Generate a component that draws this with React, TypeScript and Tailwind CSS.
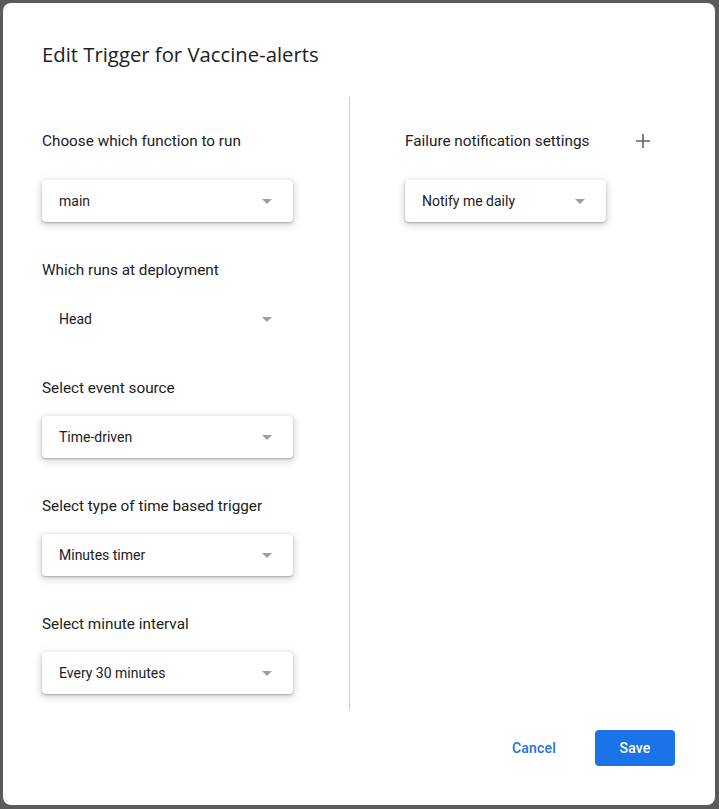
import React from "react";

// Campos del trigger, columna izquierda
const campos = [
  { label: "Choose which function to run", value: "main", box: true },
  { label: "Which runs at deployment", value: "Head", box: false },
  { label: "Select event source", value: "Time-driven", box: true },
  { label: "Select type of time based trigger", value: "Minutes timer", box: true },
  { label: "Select minute interval", value: "Every 30 minutes", box: true },
];

const Dropdown = ({ value, box, width }: { value: string; box: boolean; width: string }) => (
  <div
    className={`flex h-[42px] items-center justify-between rounded pl-[17px] pr-[21px] ${width} ${
      box ? "bg-white shadow-[0_1px_2px_rgba(60,64,67,0.35),0_2px_6px_2px_rgba(60,64,67,0.18)]" : ""
    }`}
  >
    <span className="text-[14px] text-[#202124]">{value}</span>
    <span className="h-0 w-0 border-x-[5.5px] border-t-[5px] border-x-transparent border-t-[#9e9e9e]" />
  </div>
);

export default function App() {
  return (
    <div
      className="h-[809px] w-[719px] bg-[#5b5b5b] pb-[4px] pl-[3px] pr-[4px] pt-[3px]"
      style={{ fontFamily: "Roboto, 'Liberation Sans', sans-serif" }}
    >
      <div className="flex h-full flex-col rounded-lg bg-white">
        <h1
          className="pl-[39px] pt-[37px] text-[20.3px] leading-[28px] text-[#202124]"
          style={{ fontFamily: "'Open Sans', Roboto, sans-serif" }}
        >
          Edit Trigger for Vaccine-alerts
        </h1>

        <div className="mt-[29px] flex h-[613px]">
          {/* columna izquierda */}
          <section className="w-[346px] pl-[39px] pt-[34px]">
            {campos.map((campo, key) => (
              <div key={key} className={key === 0 ? "" : "mt-[38px]"}>
                <p className="text-[15.3px] leading-[20px] text-[#202124]">{campo.label}</p>
                <div className={key === 0 ? "mt-[29px]" : "mt-[18px]"}>
                  <Dropdown value={campo.value} box={campo.box} width="w-[251px]" />
                </div>
              </div>
            ))}
          </section>

          <div className="w-px bg-[#cfcfcf]" />

          {/* columna derecha */}
          <section className="pl-[55px] pt-[34px]">
            <div className="flex w-[245px] items-center justify-between">
              <p className="text-[15.3px] leading-[20px] text-[#202124]">Failure notification settings</p>
              <svg width="14" height="14" viewBox="0 0 14 14" className="text-[#5f6368]">
                <path d="M7 0v14M0 7h14" stroke="currentColor" strokeWidth="1.6" />
              </svg>
            </div>
            <div className="mt-[29px]">
              <Dropdown value="Notify me daily" box width="w-[201px]" />
            </div>
          </section>
        </div>

        <footer className="mt-[20px] flex items-center justify-end gap-[23px] pr-[40px]">
          <button className="h-[36px] px-[16px] text-[14px] font-medium tracking-[0.2px] text-[#1a73e8]">
            Cancel
          </button>
          <button className="h-[36px] w-[80px] rounded bg-[#1a73e8] text-[14px] font-medium tracking-[0.2px] text-white">
            Save
          </button>
        </footer>
      </div>
    </div>
  );
}
